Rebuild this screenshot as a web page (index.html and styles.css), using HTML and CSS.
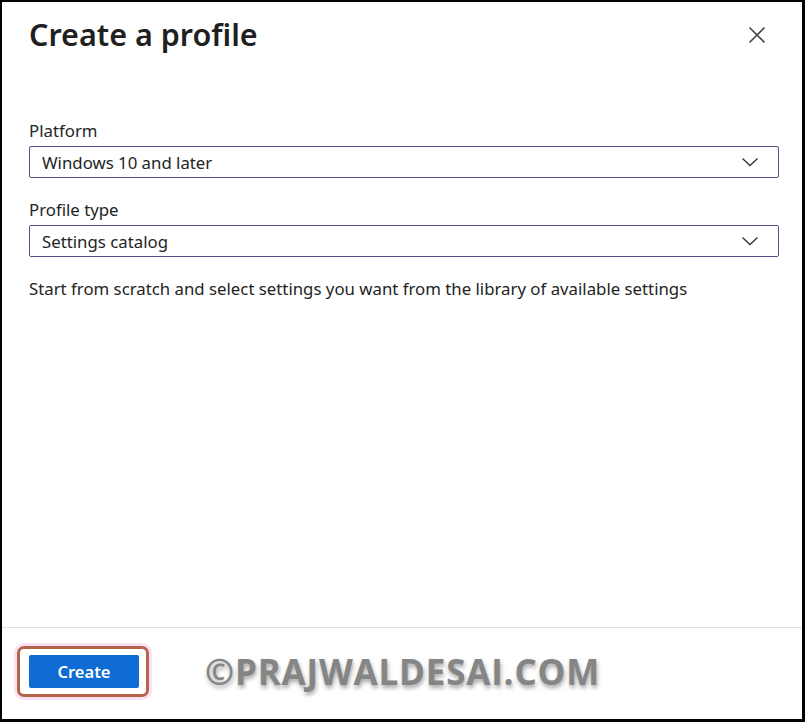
FILE: index.html
```html
<!DOCTYPE html>
<html lang="en">
<head>
    <meta charset="UTF-8">
    <meta name="viewport" content="width=device-width, initial-scale=1.0">
    <title>Create a profile</title>
    <link rel="stylesheet" href="styles.css">
</head>
<body>
    <div class="frame">
        <div class="panel">
            <div class="header">
                <h1 class="title">Create a profile</h1>
                <button class="close" aria-label="Close">
                    <svg width="18" height="18" viewBox="0 0 18 18">
                        <path d="M1.5 1.5 L16.5 16.5 M16.5 1.5 L1.5 16.5" stroke="#444" stroke-width="1.6" fill="none"/>
                    </svg>
                </button>
            </div>

            <div class="fields">
                <div class="field">
                    <label class="label">Platform</label>
                    <div class="select">
                        <span>Windows 10 and later</span>
                        <svg class="chevron" width="18" height="10" viewBox="0 0 18 10">
                            <path d="M1.5 1.5 L9 8.5 L16.5 1.5" stroke="#333" stroke-width="1.3" fill="none"/>
                        </svg>
                    </div>
                </div>

                <div class="field">
                    <label class="label">Profile type</label>
                    <div class="select">
                        <span>Settings catalog</span>
                        <svg class="chevron" width="18" height="10" viewBox="0 0 18 10">
                            <path d="M1.5 1.5 L9 8.5 L16.5 1.5" stroke="#333" stroke-width="1.3" fill="none"/>
                        </svg>
                    </div>
                </div>

                <p class="desc">Start from scratch and select settings you want from the library of available settings</p>
            </div>
        </div>

        <div class="footer">
            <div class="highlight">
                <button class="create">Create</button>
            </div>
            <span class="watermark">&copy;PRAJWALDESAI.COM</span>
        </div>
    </div>
</body>
</html>
```

FILE: styles.css
```css
/* Page reset */
body {
  margin: 0;
  background: #fff;
  font-family: "Noto Sans", "Open Sans", sans-serif;
  color: #242424;
}

/* Black outer frame */
.frame {
  width: 805px;
  height: 722px;
  box-sizing: border-box;
  border-style: solid;
  border-color: #000;
  border-width: 2px 3px 3px 2px;
  display: flex;
  flex-direction: column;
}

.panel {
  flex: 1;
  padding: 0 23px 0 27px;
}

.header {
  display: flex;
  justify-content: space-between;
  align-items: center;
  height: 64px;
}

.title {
  margin: 0;
  font-size: 30.5px;
  font-weight: 600;
  color: #1f1f1f;
}

.close {
  background: none;
  border: none;
  padding: 0;
  margin-right: 13px;
  margin-top: 2px;
  width: 18px;
  height: 18px;
  cursor: pointer;
}

.fields {
  padding-top: 49px;
}

.label {
  display: block;
  font-size: 16.8px;
  line-height: 31px;
  color: #242424;
}

.select {
  display: flex;
  justify-content: space-between;
  align-items: center;
  height: 32px;
  box-sizing: border-box;
  border: 1px solid #5e4b8b;
  border-radius: 2px;
  padding: 0 19px 0 12px;
  font-size: 16.8px;
  margin-bottom: 16px;
}

.desc {
  margin: 20px 0 0;
  font-size: 16.8px;
  color: #242424;
}

/* Footer */
.footer {
  border-top: 1px solid #e0e0e0;
  height: 92px;
  box-sizing: border-box;
  display: flex;
  align-items: center;
  padding-left: 15px;
  padding-bottom: 4px;
}

.highlight {
  border: 3px solid #b5634b;
  border-radius: 7px;
  padding: 6px 7px 6px 9px;
  box-shadow: 0 0 0 3px #fbe1f3;
}

.create {
  display: block;
  width: 110px;
  height: 33px;
  background-color: #0f6cd4;
  color: #fff;
  border: none;
  border-radius: 2px;
  font-family: "Noto Sans", sans-serif;
  font-size: 16.5px;
  font-weight: 600;
  cursor: pointer;
}

.watermark {
  margin-left: 56px;
  font-family: "Open Sans", sans-serif;
  font-weight: 700;
  font-size: 35px;
  color: #858585;
  letter-spacing: 0.8px;
  text-shadow: 1px 3px 4px rgba(0, 0, 0, 0.35);
}
```
